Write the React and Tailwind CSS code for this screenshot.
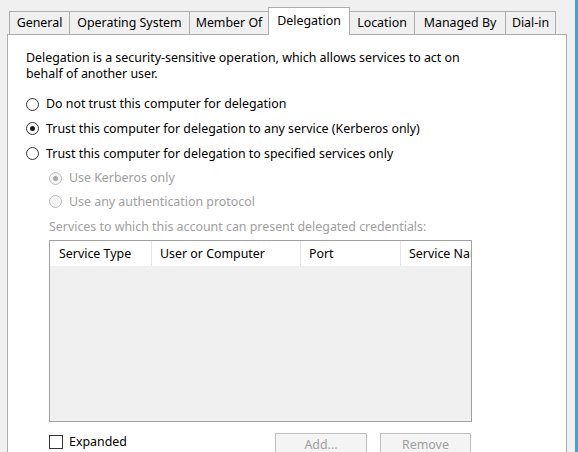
import React from "react";

const tabs = [
    {label: "General", w: "w-[60px]"},
    {label: "Operating System", w: "w-[120px]"},
    {label: "Member Of", w: "w-[79px]"},
    {label: "Delegation", w: "w-[82px]", active: true},
    {label: "Location", w: "w-[64px]"},
    {label: "Managed By", w: "w-[91px]"},
    {label: "Dial-in", w: "w-[51px]", last: true},
];

function Radio({checked, disabled}) {
    return (
        <span
            className={
                "w-[13px] h-[13px] rounded-full border flex items-center justify-center shrink-0 " +
                (disabled ? "border-[#bcbcbc] bg-[#f4f4f4]" : "border-[#333333] bg-white")
            }
        >
            {checked && (
                <span className={"w-[5px] h-[5px] rounded-full " + (disabled ? "bg-[#a8a8a8]" : "bg-[#1a1a1a]")}/>
            )}
        </span>
    );
}

function RadioRow({label, checked, disabled, className}) {
    return (
        <div className={"flex items-center gap-[7px] whitespace-nowrap " + className}>
            <Radio checked={checked} disabled={disabled}/>
            <span className={disabled ? "text-[#a0a0a0]" : "text-black"}>{label}</span>
        </div>
    );
}

export default function App() {
    return (
        <div
            className="w-[578px] h-[452px] bg-[#f0f0f0] flex overflow-hidden text-[12.4px] leading-[16px] text-black"
            style={{fontFamily: '"Noto Sans", "Liberation Sans", Arial, sans-serif'}}
        >
            <div className="w-[567px] pl-[7px] pt-[7px] flex flex-col">
                {/* tab strip */}
                <div className="flex items-end h-[27px] pl-[2px] whitespace-nowrap">
                    {tabs.map((t, i) => {
                        const afterActive = i > 0 && tabs[i - 1].active;
                        if (t.active) {
                            return (
                                <div
                                    key={t.label}
                                    className={t.w + " h-[28px] -mb-px relative z-10 bg-white border-x border-t border-[#adadad] flex items-center justify-center pb-[2px]"}
                                >
                                    {t.label}
                                </div>
                            );
                        }
                        return (
                            <div
                                key={t.label}
                                className={
                                    t.w + " h-[23px] bg-[#f0f0f0] border-t border-[#adadad] flex items-center justify-center " +
                                    (afterActive ? "" : "border-l ") + (t.last ? "border-r" : "")
                                }
                            >
                                {t.label}
                            </div>
                        );
                    })}
                </div>

                {/* page */}
                <div className="w-[560px] h-[430px] bg-white border border-[#adadad] pl-[18px] pt-[15px]">
                    <p className="w-[455px]">
                        Delegation is a security-sensitive operation, which allows services to act on behalf of another user.
                    </p>

                    <RadioRow className="h-[24px] mt-[10px]" label="Do not trust this computer for delegation"/>
                    <RadioRow className="h-[25px]" checked label="Trust this computer for delegation to any service (Kerberos only)"/>
                    <RadioRow className="h-[25px]" label="Trust this computer for delegation to specified services only"/>

                    <div className="pl-[23px]">
                        <RadioRow className="h-[24px]" checked disabled label="Use Kerberos only"/>
                        <RadioRow className="h-[23px]" disabled label="Use any authentication protocol"/>

                        <div className="mt-[6px] text-[#a0a0a0] whitespace-nowrap">
                            Services to which this account can present delegated credentials:
                        </div>

                        {/* list view */}
                        <div className="mt-[5px] w-[423px] h-[182px] border border-[#a0a0a0] bg-[#f0f0f0] flex flex-col overflow-hidden">
                            <div className="h-[25px] bg-white flex shrink-0 whitespace-nowrap">
                                <div className="w-[102px] pl-[9px] flex items-center border-r border-[#e5e5e5]">Service Type</div>
                                <div className="w-[149px] pl-[8px] flex items-center border-r border-[#e5e5e5]">User or Computer</div>
                                <div className="w-[100px] pl-[8px] flex items-center border-r border-[#e5e5e5]">Port</div>
                                <div className="w-[70px] pl-[8px] flex items-center overflow-hidden">Service Name</div>
                            </div>
                        </div>

                        <div className="flex items-start mt-[11px]">
                            <div className="w-[226px] flex items-center gap-[6px] pt-[1px]">
                                <span className="w-[14px] h-[14px] border border-[#333333] bg-white"/>
                                <span>Expanded</span>
                            </div>
                            <button className="w-[92px] h-[24px] border border-[#bfbfbf] bg-[#f4f4f4] text-[#a0a0a0]">
                                Add...
                            </button>
                            <button className="ml-[13px] w-[91px] h-[24px] border border-[#bfbfbf] bg-[#f4f4f4] text-[#a0a0a0]">
                                Remove
                            </button>
                        </div>
                    </div>
                </div>
            </div>
            <div className="w-[3px] ml-auto bg-[#3fa4de]"/>
        </div>
    );
}
